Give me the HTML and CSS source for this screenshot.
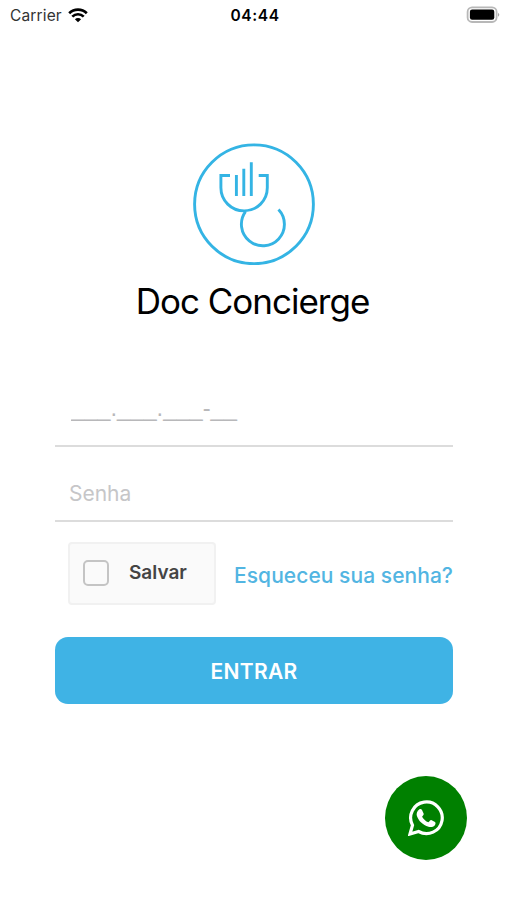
FILE: index.html
```
<!DOCTYPE html>
<html lang="pt-BR">
<head>
  <meta charset="UTF-8">
  <meta name="viewport" content="width=device-width, initial-scale=1.0">
  <title>Doc Concierge</title>
  <link rel="stylesheet" href="styles.css">
</head>
<body>
<div class="statusBar">
  <div class="carrier">
    <span class="carrierName">Carrier</span>
    <svg class="wifi" viewBox="0 0 20 15">
      <path d="M1.2 5.2 A12.6 12.6 0 0 1 18.8 5.2" />
      <path d="M4.3 8.6 A8.1 8.1 0 0 1 15.7 8.6" />
      <path class="wifiDot" d="M10 14.3 L6.9 11.3 A4.4 4.4 0 0 1 13.1 11.3 Z" />
    </svg>
  </div>
  <span class="clock">04:44</span>
  <div class="battery">
    <svg width="34" height="18" viewBox="0 0 34 18">
      <rect x="1.6" y="1.4" width="29" height="14.6" rx="4.5" fill="#fff" stroke="#b8b8b8" stroke-width="1.8" />
      <rect x="3.9" y="3.6" width="24.4" height="10.2" rx="2.2" fill="#000" />
      <path d="M32.1 6.8 Q34.4 8.8 32.1 10.8 Z" fill="#999" />
    </svg>
  </div>
</div>

<main class="login">
  <svg class="logo" viewBox="0 0 122 122">
    <circle cx="61" cy="61.3" r="59.4" />
    <path d="M37 32.5 H27.9 V44.7 A23.2 23.2 0 0 0 74.3 44.7 V32.5 H65.7" />
    <path d="M43.4 32 V53 M50.8 25.7 V53 M58.3 19.3 V53" />
    <path d="M52.5 68.7 A21.5 21.5 0 1 0 85.5 66.5" />
  </svg>
  <h1 class="title">Doc Concierge</h1>

  <form class="form">
    <input type="text" class="field cpf" placeholder="___.___.___-__" aria-label="CPF">
    <input type="password" class="field senha" placeholder="Senha" aria-label="Senha">
    <div class="options">
      <label class="save">
        <input type="checkbox" class="check">
        <span>Salvar</span>
      </label>
      <a class="forgot" href="#">Esqueceu sua senha?</a>
    </div>
    <button type="button" class="enter">ENTRAR</button>
  </form>
</main>

<a class="whatsapp" href="#" aria-label="WhatsApp">
  <svg width="36" height="36" viewBox="0 0 36 36">
    <path d="M2 34 L4.5 25.2 A15.8 15.8 0 1 1 10.6 31.5 Z" fill="none" stroke="#fff" stroke-width="3.2" />
    <path d="M11.2 9.4 C11.9 8.8 13.5 8.9 14 9.9 L15.7 13.8 C16 14.8 14.7 15.9 14.1 16.7 C15.5 19.3 17.7 21.2 20.4 22.3 C21.2 21.7 22.3 19.7 23.2 20 L27 22 C27.9 22.6 27.6 24.4 26.7 25.4 C25.1 27.1 22.8 27.4 20.5 26.8 C14.7 25 10.7 21.2 8.9 16.1 C8.1 13.5 9.1 11 11.2 9.4 Z" fill="#fff" />
  </svg>
</a>
</body>
</html>
```

FILE: styles.css
```
* {
  box-sizing: border-box;
}

body {
  margin: 0;
  min-height: 900px;
  background: #fff;
  font-family: Inter, "Liberation Sans", sans-serif;
  color: #000;
}

.statusBar {
  display: grid;
  grid-template-columns: 1fr auto 1fr;
  align-items: center;
  height: 30px;
  padding: 0 7px 0 10px;
}

.carrier {
  display: flex;
  align-items: center;
  gap: 6px;
}

.carrierName {
  font-size: 15.5px;
  letter-spacing: 0.15px;
  color: #333;
}

.wifi {
  width: 20px;
  height: 15px;
  fill: none;
  stroke: #000;
  stroke-width: 2.7;
}

.wifi .wifiDot {
  fill: #000;
  stroke: none;
}

.clock {
  font-size: 15.5px;
  font-weight: 600;
  letter-spacing: 0.6px;
}

.battery {
  display: flex;
  justify-content: flex-end;
}

.login {
  display: flex;
  flex-direction: column;
  align-items: center;
  padding: 113px 54px 0 55px;
}

.logo {
  width: 122px;
  height: 122px;
  fill: none;
  stroke: #34b4e4;
  stroke-width: 2.9;
}

.title {
  margin: 14px 3px 0 0;
  font-size: 35px;
  line-height: 44px;
  font-weight: 400;
  letter-spacing: -1px;
  white-space: nowrap;
}

.form {
  width: 100%;
  margin-top: 64px;
}

.field {
  display: block;
  width: 100%;
  border: none;
  border-bottom: 2px solid #dcdcdc;
  padding: 0 14px;
  background: none;
  font-family: inherit;
  font-size: 21px;
  outline: none;
}

.field::placeholder {
  color: #c6c6c8;
  opacity: 1;
}

.cpf {
  height: 60px;
  padding: 0 16px 15px;
  font-family: "Liberation Sans", sans-serif;
  font-size: 23.7px;
}

.cpf::placeholder {
  color: #b8b8ba;
}

.senha {
  height: 75px;
  padding-top: 20px;
}

.options {
  display: flex;
  justify-content: space-between;
  padding: 20px 0 0 13px;
}

.save {
  display: flex;
  align-items: center;
  width: 148px;
  height: 63px;
  padding: 0 0 2px 13px;
  border: 2px solid #f1f1f1;
  border-radius: 4px;
  background: #fafafa;
  font-size: 19px;
  font-weight: 600;
  color: #444;
}

.check {
  appearance: none;
  width: 26px;
  height: 26px;
  margin: 0 20px 0 0;
  border: 2px solid #c4c4c4;
  border-radius: 5px;
}

.forgot {
  padding-top: 20px;
  font-size: 21px;
  line-height: 28px;
  font-weight: 500;
  letter-spacing: 0.05px;
  color: #52b5e2;
  text-decoration: none;
  white-space: nowrap;
}

.enter {
  display: block;
  width: 100%;
  height: 67px;
  margin-top: 32px;
  border: none;
  border-radius: 13px;
  padding-top: 2px;
  background: #3fb3e5;
  font-family: inherit;
  font-size: 21px;
  font-weight: 600;
  letter-spacing: 0.3px;
  color: #fff;
}

/* Floating contact button */
.whatsapp {
  position: absolute;
  left: 385px;
  top: 776px;
  display: flex;
  align-items: center;
  justify-content: center;
  width: 82px;
  height: 84px;
  border-radius: 50%;
  background: #008000;
}
```
